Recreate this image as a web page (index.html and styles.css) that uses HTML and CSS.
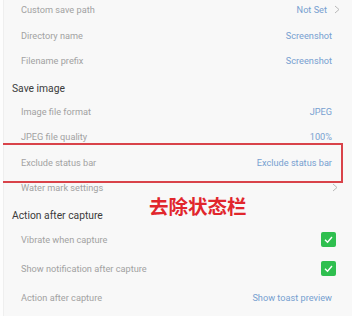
FILE: index.html
```html
<!DOCTYPE html>
<html lang="en">
<head>
    <meta charset="UTF-8">
    <meta name="viewport" content="width=device-width, initial-scale=1.0">
    <title>Screenshot settings</title>
    <link rel="stylesheet" href="styles.css">
</head>
<body>
    <div class="page">
        <div class="row">
            <span class="label">Custom save path</span>
            <span class="value">Not Set</span>
            <svg class="chevron" width="6" height="9" viewBox="0 0 6 9"><polyline points="1,1 5,4.5 1,8" /></svg>
        </div>
        <div class="row">
            <span class="label">Directory name</span>
            <span class="value">Screenshot</span>
        </div>
        <div class="row">
            <span class="label">Filename prefix</span>
            <span class="value">Screenshot</span>
        </div>

        <div class="header first">Save image</div>
        <div class="row">
            <span class="label">Image file format</span>
            <span class="value">JPEG</span>
        </div>
        <div class="row">
            <span class="label">JPEG file quality</span>
            <span class="value">100%</span>
        </div>
        <div class="row marked">
            <span class="label">Exclude status bar</span>
            <span class="value">Exclude status bar</span>
            <div class="mark-box"></div>
        </div>
        <div class="row">
            <span class="label">Water mark settings</span>
            <svg class="chevron" width="6" height="9" viewBox="0 0 6 9"><polyline points="1,1 5,4.5 1,8" /></svg>
        </div>

        <div class="header second">
            Action after capture
            <span class="note">去除状态栏</span>
        </div>
        <div class="row tall">
            <span class="label">Vibrate when capture</span>
            <span class="check">
                <svg width="11" height="11" viewBox="0 0 11 11"><polyline points="2,5.8 4.5,8.2 9,3" /></svg>
            </span>
        </div>
        <div class="row tall">
            <span class="label">Show notification after capture</span>
            <span class="check">
                <svg width="11" height="11" viewBox="0 0 11 11"><polyline points="2,5.8 4.5,8.2 9,3" /></svg>
            </span>
        </div>
        <div class="row tall">
            <span class="label">Action after capture</span>
            <span class="value">Show toast preview</span>
        </div>
    </div>
</body>
</html>
```

FILE: styles.css
```css
body {
    margin: 0;
    background: #fdfdfd;
    font-family: Roboto, "Liberation Sans", Arial, sans-serif;
    overflow: hidden;
}
.page {
    margin-left: 3px;
    margin-top: -3px;
    height: 322px;
    background: #f8f8f8;
    border-left: 1px solid #efefef;
}
.row {
    position: relative;
    display: flex;
    align-items: center;
    height: 25.5px;
    padding: 0 20px 0 17px;
    font-size: 9.2px;
}
.row.tall {
    height: 29px;
}
.label {
    flex: 1;
    color: #a2a2a2;
}
.value {
    color: #77a0d0;
}
.chevron {
    margin-left: 7px;
    margin-right: -8px;
    fill: none;
    stroke: #b9b9b9;
    stroke-width: 1;
}
.row .label + .chevron {
    margin-left: 0;
    margin-right: -6px;
}
.header {
    position: relative;
    box-sizing: border-box;
    padding-left: 8px;
    font-size: 10.3px;
    color: #3b3b3b;
}
.header.first {
    height: 25px;
    padding-top: 8px;
}
.header.second {
    height: 24px;
    padding-top: 8px;
}
.note {
    position: absolute;
    left: 145px;
    top: -10px;
    font-size: 19.5px;
    font-weight: bold;
    color: #e1262c;
    font-family: "Noto Sans CJK SC", sans-serif;
}
.mark-box {
    position: absolute;
    left: -1px;
    right: 9px;
    top: -7px;
    bottom: -8px;
    border: 2px solid #d9434a;
    border-left: none;
}
.check {
    width: 15px;
    height: 15px;
    margin-right: -4px;
    border-radius: 2px;
    background: #2fbf4f;
    display: flex;
    align-items: center;
    justify-content: center;
}
.check svg {
    fill: none;
    stroke: #fff;
    stroke-width: 1.4;
}
```
